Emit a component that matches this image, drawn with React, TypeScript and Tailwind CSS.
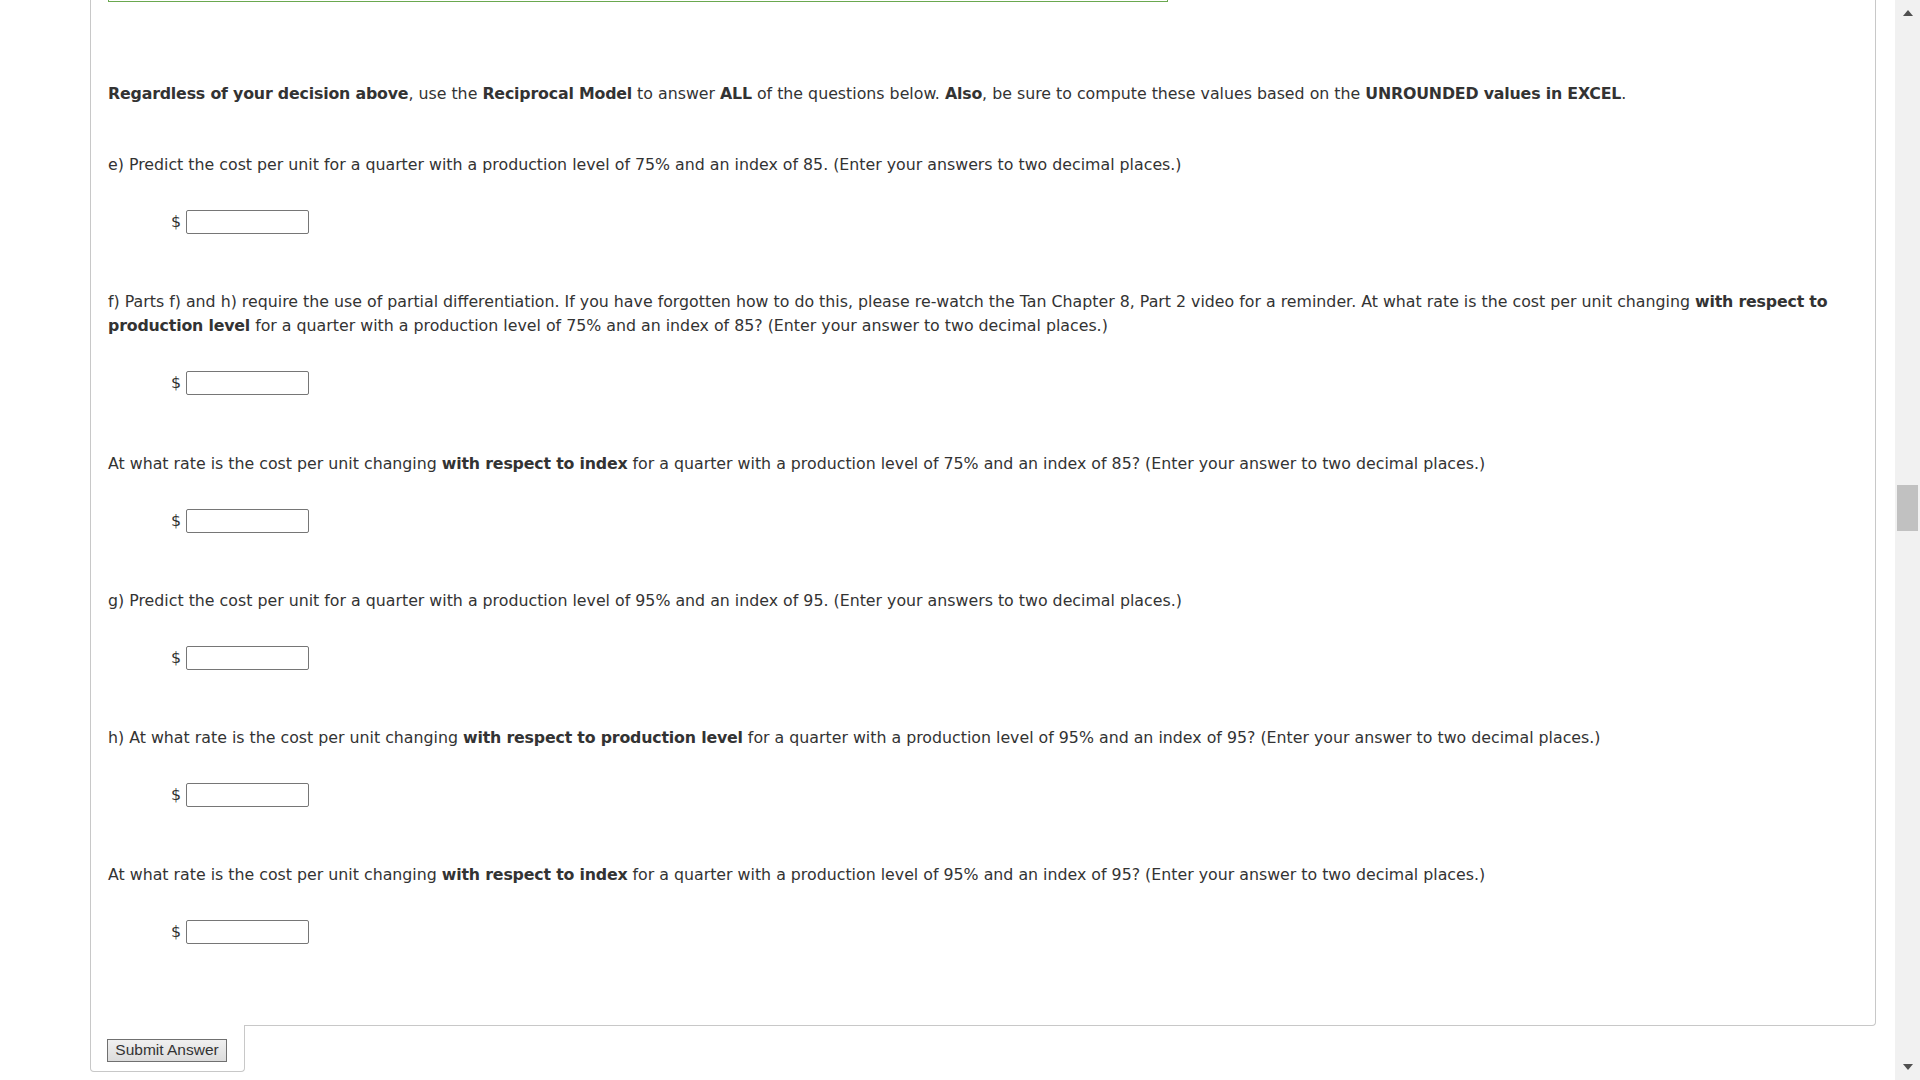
import React from "react";

type Part = { text: string; bold?: boolean };

const questions: { parts: Part[] }[] = [
  {
    parts: [
      { text: "e) Predict the cost per unit for a quarter with a production level of 75% and an index of 85. (Enter your answers to two decimal places.)" },
    ],
  },
  {
    parts: [
      { text: "f) Parts f) and h) require the use of partial differentiation. If you have forgotten how to do this, please re-watch the Tan Chapter 8, Part 2 video for a reminder. At what rate is the cost per unit changing " },
      { text: "with respect to production level", bold: true },
      { text: " for a quarter with a production level of 75% and an index of 85? (Enter your answer to two decimal places.)" },
    ],
  },
  {
    parts: [
      { text: "At what rate is the cost per unit changing " },
      { text: "with respect to index", bold: true },
      { text: " for a quarter with a production level of 75% and an index of 85? (Enter your answer to two decimal places.)" },
    ],
  },
  {
    parts: [
      { text: "g) Predict the cost per unit for a quarter with a production level of 95% and an index of 95. (Enter your answers to two decimal places.)" },
    ],
  },
  {
    parts: [
      { text: "h) At what rate is the cost per unit changing " },
      { text: "with respect to production level", bold: true },
      { text: " for a quarter with a production level of 95% and an index of 95? (Enter your answer to two decimal places.)" },
    ],
  },
  {
    parts: [
      { text: "At what rate is the cost per unit changing " },
      { text: "with respect to index", bold: true },
      { text: " for a quarter with a production level of 95% and an index of 95? (Enter your answer to two decimal places.)" },
    ],
  },
];

function B({ children }: { children: React.ReactNode }) {
  return <b className="font-bold tracking-[-0.18px]">{children}</b>;
}

function AnswerRow() {
  return (
    <div className="mt-[33px] flex items-center gap-[5px] pl-[63px]">
      <span>$</span>
      <input
        type="text"
        className="h-[24px] w-[123px] rounded-[2px] border border-[#767676] bg-white focus:outline-none"
      />
    </div>
  );
}

function Scrollbar() {
  return (
    <div className="flex h-full w-[25px] flex-col bg-[#f1f1f1]">
      {/* up arrow */}
      <div className="flex h-[26px] items-start justify-center pt-[10px]">
        <div className="h-0 w-0 border-x-[5.5px] border-b-[6px] border-x-transparent border-b-[#505050]" />
      </div>
      <div className="flex-1 pl-[2px] pr-[2px] pt-[459px]">
        <div className="h-[46px] w-[21px] bg-[#c1c1c1]" />
      </div>
      {/* down arrow */}
      <div className="flex h-[26px] items-start justify-center pt-[10px]">
        <div className="h-0 w-0 border-x-[5.5px] border-t-[6px] border-x-transparent border-t-[#505050]" />
      </div>
    </div>
  );
}

export default function App() {
  return (
    <div
      className="flex h-[1080px] w-[1920px] overflow-hidden bg-white text-[15.8px] leading-[24px] text-[#333]"
      style={{ fontFamily: '"DejaVu Sans", Verdana, sans-serif' }}
    >
      <div className="flex-1 pl-[90px] pr-[19px]">
        {/* Question panel */}
        <div className="h-[1026px] rounded-br-[4px] border-x border-b border-[#c8c8c8] pl-[17px] pr-[17px]">
          {/* bottom of the green box above */}
          <div className="h-[2px] w-[1060px] border-x border-b border-[#6aa84f]" />

          <p className="mt-[80px]">
            <B>Regardless of your decision above</B>, use the <B>Reciprocal Model</B> to answer <B>ALL</B> of the
            questions below. <B>Also</B>, be sure to compute these values based on the{" "}
            <B>UNROUNDED values in EXCEL</B>.
          </p>

          {questions.map((q, i) => (
            <div key={i}>
              <p className={i === 0 ? "mt-[47px]" : i === 2 ? "mt-[57px]" : "mt-[56px]"}>
                {q.parts.map((p, j) =>
                  p.bold ? <B key={j}>{p.text}</B> : <span key={j}>{p.text}</span>
                )}
              </p>
              <AnswerRow />
            </div>
          ))}
        </div>

        {/* Submit tab */}
        <div className="relative -mt-[1px] h-[47px] w-[155px] rounded-b-[4px] border-x border-b border-[#c8c8c8] bg-white pl-[16px] pt-[13px]">
          <button
            className="h-[23px] w-[120px] border border-[#707070] bg-gradient-to-b from-[#f0f0f0] to-[#dcdcdc] text-[15.5px] leading-[20px] text-[#333]"
            style={{ fontFamily: '"Liberation Sans", Arial, sans-serif' }}
          >
            Submit Answer
          </button>
        </div>
      </div>

      <Scrollbar />
    </div>
  );
}
